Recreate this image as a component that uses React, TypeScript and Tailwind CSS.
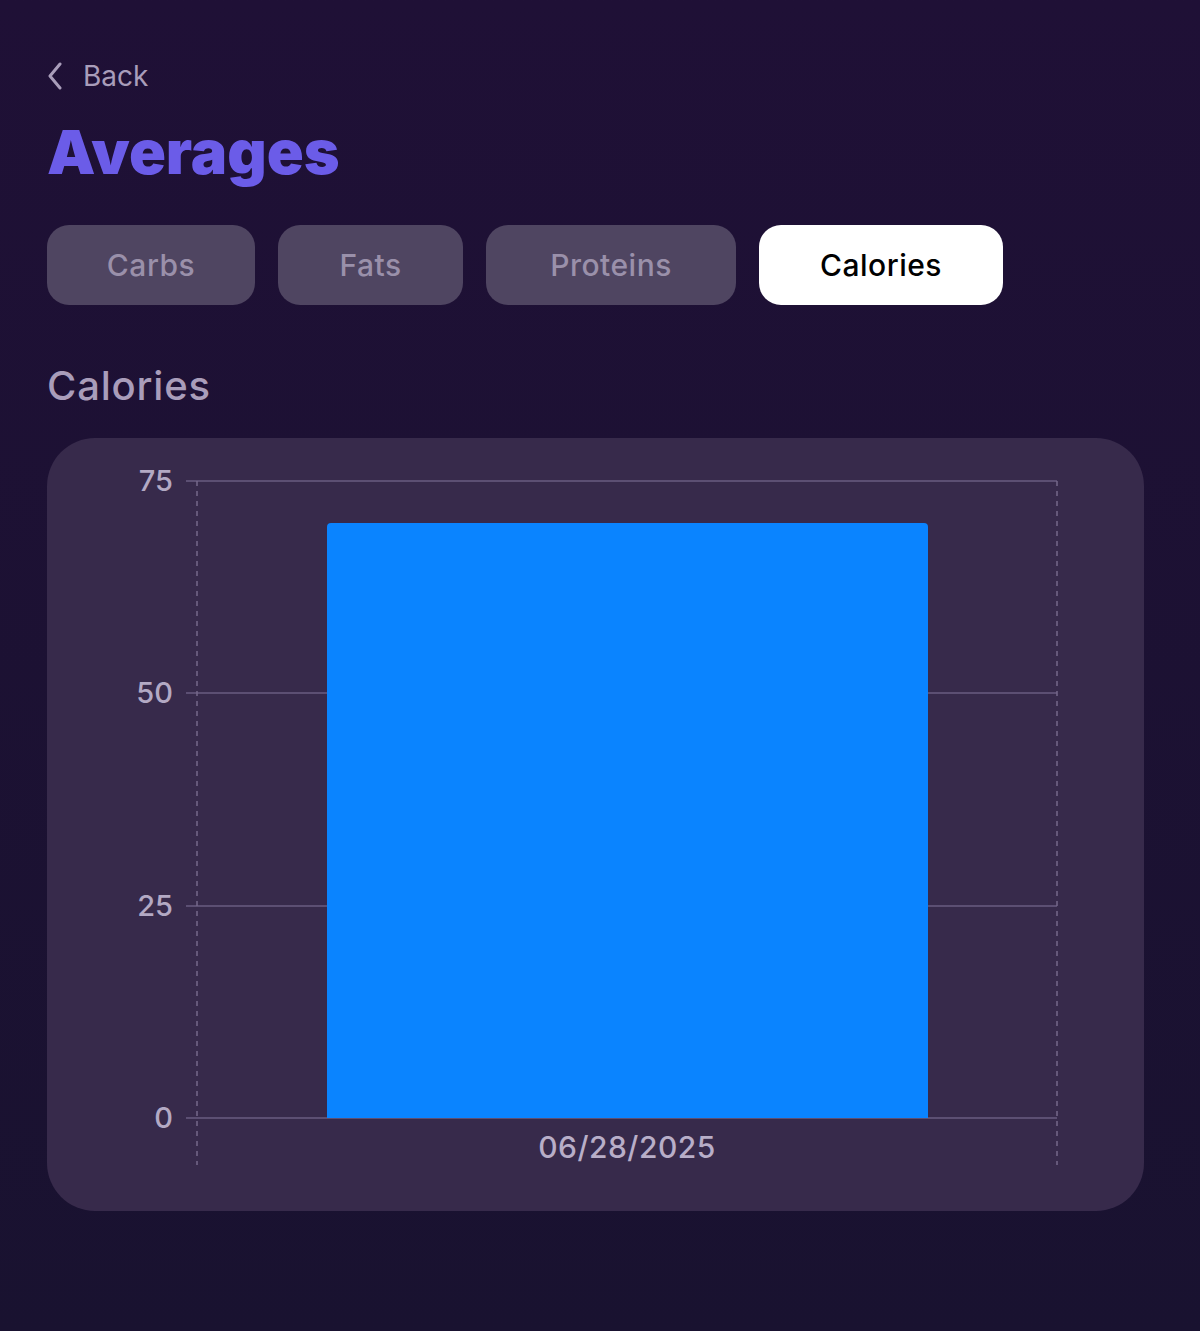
import React, { useState } from 'react';

const tabs = [
  { name: 'Carbs', width: 'w-[208px]' },
  { name: 'Fats', width: 'w-[185px]' },
  { name: 'Proteins', width: 'w-[250px]' },
  { name: 'Calories', width: 'w-[244px]' },
];

const ticks = [
  { label: '75', y: 43 },
  { label: '50', y: 255 },
  { label: '25', y: 468 },
  { label: '0', y: 680 },
];

const CaloriesChart: React.FC = () => (
  <svg viewBox="0 0 1097 773" className="block w-full h-full">
    {ticks.map((t) => (
      <g key={t.label}>
        <line x1={139} x2={1010} y1={t.y} y2={t.y} stroke="#6a5d80" strokeWidth={1.5} />
        <text
          x={126}
          y={t.y + 10}
          textAnchor="end"
          fill="#b3a9c4"
          fontSize={29}
          fontFamily="Inter, 'Liberation Sans', sans-serif"
          fontWeight={500}
        >
          {t.label}
        </text>
      </g>
    ))}
    <line x1={150} x2={150} y1={43} y2={727} stroke="#75688a" strokeWidth={1.5} strokeDasharray="5 5" />
    <line x1={1010} x2={1010} y1={43} y2={727} stroke="#75688a" strokeWidth={1.5} strokeDasharray="5 5" />
    <path d="M280 89 Q280 85 284 85 L877 85 Q881 85 881 89 L881 680 L280 680 Z" fill="#0a84ff" />
    <text
      x={580}
      y={720}
      textAnchor="middle"
      fill="#b8aec8"
      fontSize={30}
      fontFamily="Inter, 'Liberation Sans', sans-serif"
      fontWeight={500}
      letterSpacing={0.5}
    >
      06/28/2025
    </text>
  </svg>
);

const App: React.FC = () => {
  const [active, setActive] = useState('Calories');

  return (
    <div className="min-h-[1331px] w-full bg-gradient-to-b from-[#1f1036] to-[#191230] px-[47px] pt-[58px] font-['Inter','Liberation_Sans',sans-serif]">
      <button className="flex items-center gap-[20px] text-[#a99dba]">
        <svg width="16" height="28" viewBox="0 0 16 28" fill="none">
          <path d="M13 2 L3 14 L13 26" stroke="currentColor" strokeWidth="3" strokeLinecap="round" strokeLinejoin="round" />
        </svg>
        <span className="text-[28px] leading-[36px]">Back</span>
      </button>

      <h1 className="mt-[26px] text-[61px] leading-[64px] font-black text-[#6b5ce8]">Averages</h1>

      <div className="mt-[41px] flex gap-[23px]">
        {tabs.map((tab) => (
          <button
            key={tab.name}
            onClick={() => setActive(tab.name)}
            className={`h-[80px] ${tab.width} rounded-[22px] text-[30px] font-medium tracking-[0.5px] ${
              active === tab.name ? 'bg-white text-black' : 'bg-[#4f4561] text-[#9a90aa]'
            }`}
          >
            {tab.name}
          </button>
        ))}
      </div>

      <h2 className="mt-[57px] text-[40px] leading-[48px] font-medium tracking-[0.8px] text-[#a99dba]">{active}</h2>

      <div className="mt-[28px] h-[773px] w-[1097px] rounded-[48px] bg-[#372a4b]">
        <CaloriesChart />
      </div>
    </div>
  );
};

export default App;
